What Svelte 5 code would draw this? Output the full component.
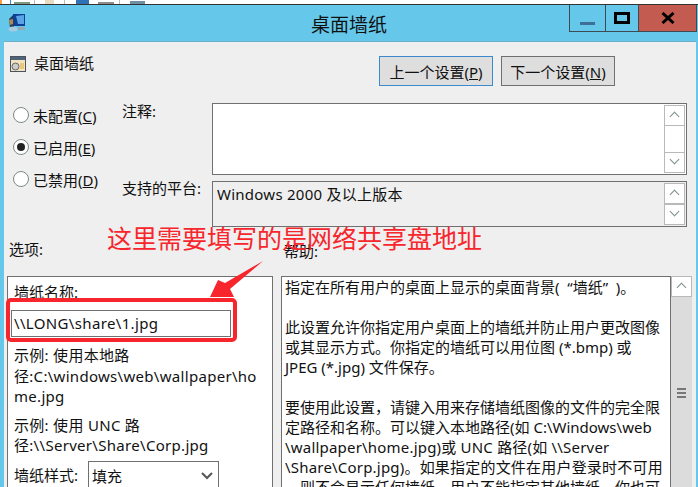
<script>
  const helpLines = [
    { text: "指定在所有用户的桌面上显示的桌面背景(  “墙纸”  )。" },
    { text: "" },
    { text: "此设置允许你指定用户桌面上的墙纸并防止用户更改图像" },
    { text: "或其显示方式。你指定的墙纸可以用位图 (*.bmp) 或" },
    { text: "JPEG (*.jpg) 文件保存。" },
    { text: "" },
    { text: "要使用此设置，请键入用来存储墙纸图像的文件的完全限" },
    { text: "定路径和名称。可以键入本地路径(如 C:\\Windows\\web" },
    { text: "\\wallpaper\\home.jpg)或 UNC 路径(如 \\\\Server", wide: true },
    { text: "\\Share\\Corp.jpg)。如果指定的文件在用户登录时不可用", wide: true },
    { text: "，则不会显示任何墙纸。用户不能指定其他墙纸。你也可" }
  ];
  const radios = [
    { label: "未配置", key: "C" },
    { label: "已启用", key: "E", on: true },
    { label: "已禁用", key: "D" }
  ];
</script>

<div class="window">
  <!-- bit of the desktop toolbar showing above the window -->
  <svg class="strip" width="698" height="5" viewBox="0 0 698 5">
    <rect width="698" height="4" fill="#fff" />
    <rect width="2" height="4" fill="#f0a040" />
    <rect x="10" width="1" height="4" fill="#3b8ad0" />
    <rect x="14" y="2" width="16" height="2" fill="#7f9a80" />
    <rect x="34" width="1" height="4" fill="#bbb" />
    <rect x="45" width="9" height="4" fill="#e8dcc0" />
    <rect x="64" width="1" height="4" fill="#bbb" />
    <rect x="76" width="13" height="4" fill="#2f72b8" />
    <rect x="98" y="2" width="16" height="2" fill="#8d8d8d" />
    <rect x="119" width="1" height="4" fill="#bbb" />
    <rect x="130" y="1" width="15" height="3" fill="#6f8fa5" />
    <rect y="4" width="698" height="1" fill="#333" />
  </svg>
  <div class="titlebar">
    <svg class="app-icon" width="20" height="20" viewBox="0 0 20 20">
      <rect x="6" y="1" width="12" height="12" fill="#0f3f96" />
      <path d="M9 3 L17 2 L17 11 L11 11 Z" fill="#5aa4e6" />
      <path d="M2 6 L6 2 L7 14 L3 15 Z" fill="#24405e" />
      <path d="M2 7 L6 6 L6 11 L3 12 Z" fill="#b08a50" />
      <ellipse cx="6" cy="16" rx="4.5" ry="2.5" fill="#a9cbe0" />
      <rect x="11" y="14" width="7" height="3" fill="#98a8b0" />
    </svg>
    <span class="title">桌面墙纸</span>
    <div class="controls">
      <div class="ctl min"><span></span></div>
      <div class="ctl max"><span></span></div>
      <div class="ctl close">
        <svg width="14" height="12" viewBox="0 0 14 12"><path d="M1.5 1 L12.5 11 M12.5 1 L1.5 11" stroke="#000" stroke-width="3" /></svg>
      </div>
    </div>
  </div>

  <div class="body">
    <div class="head">
      <div class="policy">
        <svg width="16" height="16" viewBox="0 0 16 16">
          <rect x="0.5" y="0.5" width="15" height="15" fill="#f3e3bf" stroke="#4a5360" />
          <rect x="1" y="1" width="14" height="3" fill="#4f6478" />
          <circle cx="5.5" cy="10.5" r="3.5" fill="#ccc" stroke="#666" />
          <rect x="10" y="7" width="4" height="6" fill="#e8c878" />
        </svg>
        <span>桌面墙纸</span>
      </div>
      <div class="nav">
        <button class="btn focus">上一个设置(<u>P</u>)</button>
        <button class="btn">下一个设置(<u>N</u>)</button>
      </div>
    </div>

    <div class="config">
      <div class="radios">
        {#each radios as r}
          <label class="radio">
            <span class="dot" class:on={r.on}></span>
            <span>{r.label}(<u>{r.key}</u>)</span>
          </label>
        {/each}
      </div>
      <div class="fields">
        <div class="field comment">
          <span class="field-label">注释:</span>
          <div class="box white">
            <div class="vscroll">
              <div class="arrow up"></div>
              <div class="track"></div>
              <div class="arrow down"></div>
            </div>
          </div>
        </div>
        <div class="field platform">
          <span class="field-label">支持的平台:</span>
          <div class="box">
            <span class="platform-text">Windows 2000 及以上版本</span>
            <div class="vscroll">
              <div class="arrow up"></div>
              <div class="arrow down"></div>
            </div>
          </div>
        </div>
      </div>
    </div>

    <div class="section-labels">
      <span class="options-label">选项:</span>
      <span class="help-label">帮助:</span>
    </div>

    <div class="panes">
      <div class="options">
        <div class="opt-title">墙纸名称:</div>
        <div class="input">\\LONG\share\1.jpg</div>
        <p>示例: 使用本地路<br />径:C:\windows\web\wallpaper\ho<br />me.jpg</p>
        <p>示例: 使用 UNC 路<br />径:\\Server\Share\Corp.jpg</p>
        <div class="style-row">
          <span class="style-label">墙纸样式:</span>
          <div class="select">
            <span>填充</span>
            <svg width="12" height="8" viewBox="0 0 12 8"><path d="M1 1 L6 6 L11 1" fill="none" stroke="#555" stroke-width="2" /></svg>
          </div>
        </div>
      </div>
      <div class="help">
        <div class="help-text">
          {#each helpLines as line}
            <div class="line" class:wide={line.wide}>{line.text || "\u00a0"}</div>
          {/each}
        </div>
        <div class="help-scroll">
          <div class="arrow up"></div>
          <div class="thumb"><span></span><span></span><span></span></div>
        </div>
      </div>
    </div>
  </div>

  <!-- annotation drawn over the screenshot -->
  <div class="note">这里需要填写的是网络共享盘地址</div>
  <div class="red-box"></div>
  <svg class="red-arrow" width="56" height="44" viewBox="0 0 56 44">
    <path d="M54 2 L16 24 L9 21 L1 38 L25 38 L21 30 Z" fill="#f7262c" />
  </svg>
</div>

<style>
  :global(body) {
    margin: 0;
    overflow: hidden;
  }

  .window {
    position: relative;
    width: 698px;
    height: 487px;
    overflow: hidden;
    background: #65c8eb;
    font-family: "Noto Sans", "Noto Sans CJK SC", sans-serif;
    font-size: 15px;
    color: #111;
  }

  .strip {
    display: block;
    height: 5px;
  }

  .titlebar {
    height: 36px;
    position: relative;
    display: flex;
    align-items: center;
    justify-content: center;
  }

  .app-icon {
    position: absolute;
    left: 7px;
    top: 8px;
  }

  .title {
    font-size: 19px;
    line-height: 24px;
    margin-top: 3px;
  }

  .controls {
    position: absolute;
    top: 0;
    left: 569px;
    display: flex;
    height: 27px;
    border: 1px solid #3c4a52;
    border-top: none;
    width: 128px;
    box-sizing: border-box;
  }

  .ctl {
    display: flex;
    align-items: center;
    justify-content: center;
    box-sizing: border-box;
  }

  .min {
    width: 36px;
    border-right: 1px solid #3c4a52;
  }

  .min span {
    width: 15px;
    height: 3px;
    background: #3f6f94;
    margin-top: 10px;
  }

  .max {
    width: 33px;
    border-right: 1px solid #3c4a52;
  }

  .max span {
    width: 16px;
    height: 12px;
    border: 3px solid #000;
    box-sizing: border-box;
  }

  .close {
    flex: 1;
    background: #c35b51;
  }

  .body {
    margin: 0 2px 0 4px;
    height: 446px;
    background: #efefef;
    border-top: 1px solid #6ab0c8;
    box-sizing: border-box;
  }

  .head {
    display: flex;
    justify-content: space-between;
    height: 61px;
    padding: 14px 0 0 6px;
    box-sizing: border-box;
  }

  .policy {
    display: flex;
    align-items: flex-start;
    gap: 8px;
    height: 16px;
  }

  .policy span {
    line-height: 20px;
    margin-top: -3px;
  }

  .nav {
    display: flex;
    gap: 8px;
    margin-right: 81px;
  }

  .btn {
    width: 114px;
    height: 30px;
    padding: 0;
    background: #dedede;
    border: 1px solid #707070;
    font: inherit;
    color: #111;
  }

  .btn.focus {
    border-color: #3b8ad0;
  }

  .config {
    display: flex;
    height: 136px;
  }

  .radios {
    width: 118px;
    padding: 2px 0 0 9px;
    box-sizing: border-box;
    display: flex;
    flex-direction: column;
    gap: 12px;
  }

  .radio {
    display: flex;
    align-items: center;
    gap: 4px;
    height: 20px;
  }

  .dot {
    width: 16px;
    height: 16px;
    border-radius: 50%;
    border: 1px solid #7d8a85;
    background: #fff;
    box-sizing: border-box;
    display: flex;
    align-items: center;
    justify-content: center;
  }

  .dot.on::after {
    content: "";
    width: 8px;
    height: 8px;
    border-radius: 50%;
    background: #222;
  }

  .fields {
    flex: 1;
    padding-right: 9px;
    display: flex;
    flex-direction: column;
    gap: 6px;
  }

  .field {
    display: flex;
  }

  .field-label {
    width: 90px;
    flex: none;
    line-height: 20px;
    margin-top: -3px;
  }

  .comment .field-label {
    margin-top: -2px;
  }

  .box {
    position: relative;
    flex: 1;
    border: 1px solid #707070;
    box-sizing: border-box;
    background: #efefef;
  }

  .box.white {
    background: #fff;
  }

  .comment .box {
    height: 72px;
  }

  .platform .box {
    height: 46px;
  }

  .platform-text {
    display: block;
    padding: 2px 4px;
    line-height: 20px;
    letter-spacing: 0.25px;
  }

  .vscroll {
    position: absolute;
    top: 1px;
    bottom: 1px;
    right: 1px;
    width: 21px;
    display: flex;
    flex-direction: column;
  }

  .arrow {
    height: 21px;
    background: #fff;
    border: 1px solid #b9b9b9;
    box-sizing: border-box;
    position: relative;
  }

  .arrow::after {
    content: "";
    position: absolute;
    left: 6px;
    width: 6px;
    height: 6px;
    border-left: 1px solid #7f8f88;
    border-top: 1px solid #7f8f88;
    transform: rotate(45deg);
    top: 7px;
  }

  .arrow.down::after {
    transform: rotate(225deg);
    top: 3px;
  }

  .track {
    flex: 1;
    background: #fff;
    border-left: 1px solid #b9b9b9;
    border-right: 1px solid #b9b9b9;
  }

  .section-labels {
    display: flex;
    height: 37px;
    padding-left: 5px;
  }

  .options-label {
    width: 275px;
    line-height: 20px;
  }

  .help-label {
    line-height: 20px;
    margin-top: 2px;
  }

  .panes {
    display: flex;
    gap: 8px;
    padding-left: 3px;
  }

  .options {
    width: 266px;
    height: 230px;
    border: 1px solid #707070;
    background: #fff;
    padding: 0 6px;
    box-sizing: border-box;
    flex: none;
  }

  .opt-title {
    line-height: 20px;
    margin-top: 5px;
  }

  .input {
    margin: 8px 0 0 -3px;
    width: 220px;
    height: 27px;
    border: 1px solid #707070;
    box-sizing: border-box;
    padding-left: 2px;
    line-height: 24px;
    letter-spacing: 0.35px;
  }

  .options p {
    margin: 8px 0 0;
    line-height: 20.5px;
    width: 255px;
    white-space: nowrap;
    letter-spacing: 0.3px;
  }

  .options p + p {
    margin-top: 8px;
  }

  .style-row {
    display: flex;
    align-items: center;
    gap: 10px;
    margin-top: 5px;
  }

  .style-label {
    margin-top: -3px;
  }

  .select {
    width: 131px;
    height: 30px;
    border: 1px solid #707070;
    box-sizing: border-box;
    display: flex;
    align-items: center;
    justify-content: space-between;
    padding: 0 5px 0 3px;
  }

  .help {
    flex: none;
    width: 411px;
    height: 230px;
    display: flex;
  }

  .help-text {
    width: 390px;
    box-sizing: border-box;
    border: 1px solid #707070;
    background: #fff;
    padding: 0 3px;
    white-space: pre;
    overflow: hidden;
  }

  .line {
    line-height: 20px;
  }

  .line.wide {
    letter-spacing: 0.2px;
  }

  .help-scroll {
    width: 21px;
    background: #dcdcdc;
    display: flex;
    flex-direction: column;
  }

  .thumb {
    margin-top: 91px;
    display: flex;
    flex-direction: column;
    align-items: center;
    gap: 2px;
  }

  .thumb span {
    width: 9px;
    height: 2px;
    background: #777;
  }

  .note {
    position: absolute;
    left: 107px;
    top: 222px;
    font-size: 25px;
    line-height: 30px;
    color: #f7262c;
    white-space: nowrap;
    font-family: "Noto Sans CJK SC", sans-serif;
  }

  .red-box {
    position: absolute;
    left: 6px;
    top: 298px;
    width: 231px;
    height: 44px;
    border: 4px solid #f7262c;
    border-radius: 5px;
    box-sizing: border-box;
  }

  .red-arrow {
    position: absolute;
    left: 209px;
    top: 259px;
  }
</style>
